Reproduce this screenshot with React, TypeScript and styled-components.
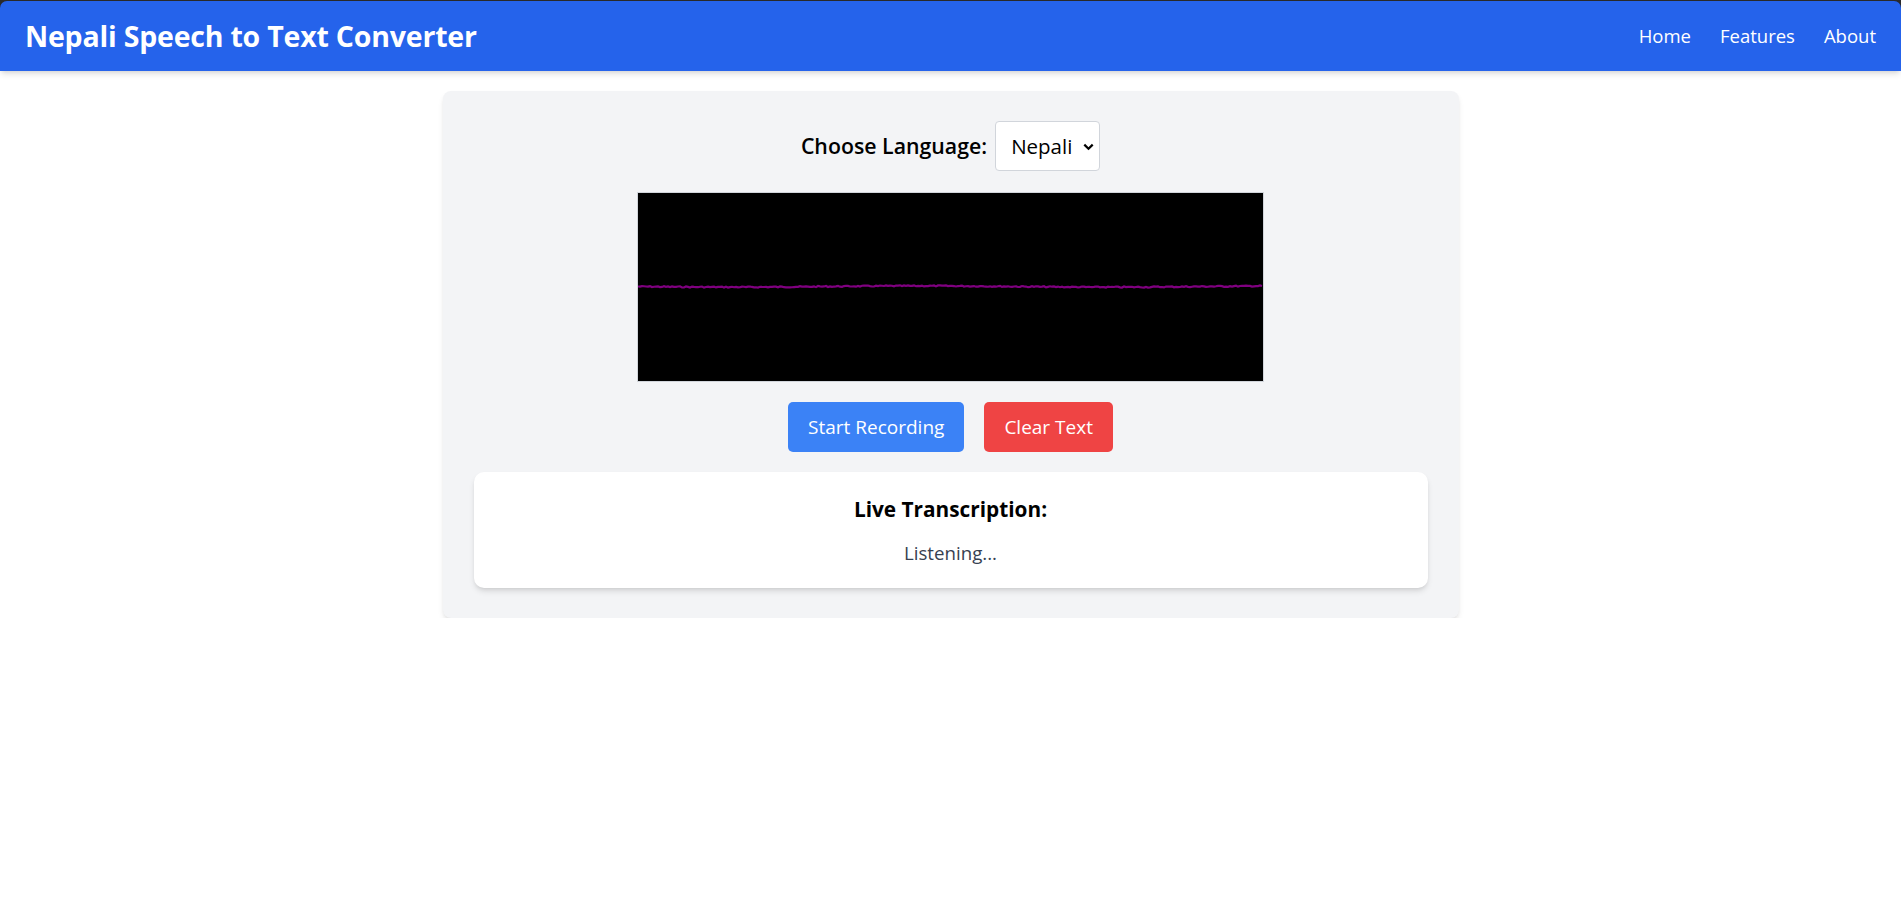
import React from "react";
import styled, { createGlobalStyle } from "styled-components";

const GlobalStyle = createGlobalStyle`
  html, body {
    margin: 0;
    padding: 0;
    background: #ffffff;
    font-family: "Open Sans", "Noto Sans", "Liberation Sans", sans-serif;
    color: #000;
  }
  * { box-sizing: border-box; }
`;

const TopFrame = styled.div`
  background: #2a2a2a;
  padding-top: 1px;
`;

const NavBar = styled.header`
  position: relative;
  z-index: 1;
  height: 70px;
  display: flex;
  align-items: center;
  justify-content: space-between;
  padding: 0 25px 0 25px;
  background: #2563eb;
  border-radius: 7px 7px 0 0;
  box-shadow: 0 4px 6px -1px rgba(0, 0, 0, 0.12), 0 2px 4px -2px rgba(0, 0, 0, 0.1);
`;

const Brand = styled.h1`
  margin: 0;
  font-size: 28.5px;
  line-height: 36px;
  font-weight: 700;
  color: #ffffff;
  letter-spacing: -0.2px;
`;

const NavLinks = styled.nav`
  display: flex;
  gap: 29px;
`;

const NavLink = styled.a`
  font-size: 18.5px;
  line-height: 28px;
  color: #ffffff;
  text-decoration: none;
`;

const Main = styled.main`
  display: flex;
  justify-content: center;
  padding-top: 20px;
`;

const Card = styled.section`
  width: 1016px;
  background: #f3f4f6;
  border-radius: 8px;
  padding: 30px 31px 30px 31px;
  box-shadow: 0 4px 6px -1px rgba(0, 0, 0, 0.1), 0 2px 4px -2px rgba(0, 0, 0, 0.1);
  display: flex;
  flex-direction: column;
  align-items: center;
`;

const LanguageRow = styled.div`
  display: flex;
  align-items: center;
  gap: 8px;
`;

const Label = styled.label`
  font-size: 21.3px;
  font-weight: 600;
  line-height: 30px;
  color: #000;
`;

const SelectWrap = styled.div`
  position: relative;
  display: inline-flex;
`;

const Select = styled.select`
  appearance: none;
  -webkit-appearance: none;
  height: 50px;
  width: 105px;
  padding: 0 24px 0 15px;
  font-family: inherit;
  font-size: 20.5px;
  color: #000;
  background: #ffffff;
  border: 1px solid #d1d5db;
  border-radius: 4px;
  outline: none;
`;

const Chevron = styled.svg`
  position: absolute;
  right: 6px;
  top: 50%;
  width: 11px;
  height: 8px;
  margin-top: -3px;
  pointer-events: none;
`;

const Scope = styled.div`
  margin-top: 21px;
  width: 627px;
  height: 190px;
  background: #000;
  border: 1px solid #d1d5db;
  display: flex;
`;

const Wave = styled.svg`
  width: 100%;
  height: 100%;
  display: block;
`;

const ButtonRow = styled.div`
  margin-top: 20px;
  display: flex;
  gap: 20px;
`;

const Button = styled.button<{ $tone: "blue" | "red" }>`
  height: 50px;
  padding: 0 20px;
  border: none;
  border-radius: 5px;
  font-family: inherit;
  font-size: 19px;
  color: #ffffff;
  cursor: pointer;
  background: ${(p) => (p.$tone === "blue" ? "#3b82f6" : "#ef4444")};
`;

const TranscriptBox = styled.div`
  margin-top: 20px;
  width: 100%;
  background: #ffffff;
  border-radius: 10px;
  padding: 23px 24px 21px;
  box-shadow: 0 4px 6px -1px rgba(0, 0, 0, 0.12), 0 2px 4px -2px rgba(0, 0, 0, 0.1);
  text-align: center;
`;

const TranscriptTitle = styled.h2`
  margin: 0;
  font-size: 20.8px;
  line-height: 28px;
  font-weight: 700;
  color: #000;
`;

const TranscriptText = styled.p`
  margin: 16px 0 0;
  font-size: 18.7px;
  line-height: 28px;
  color: #374151;
`;

function wavePoints(): string {
  const pts: string[] = [];
  let seed = 7;
  const rnd = () => {
    seed = (seed * 9301 + 49297) % 233280;
    return seed / 233280;
  };
  for (let x = 0; x <= 625; x += 2) {
    const base = 93.5 + Math.sin(x / 60) * 0.6;
    const n = (rnd() - 0.5) * 1.2;
    pts.push(`${x},${(base + n).toFixed(2)}`);
  }
  return pts.join(" ");
}

export default function App() {
  const points = React.useMemo(wavePoints, []);
  return (
    <>
      <GlobalStyle />
      <TopFrame>
        <NavBar>
          <Brand>Nepali Speech to Text Converter</Brand>
          <NavLinks>
            <NavLink href="#">Home</NavLink>
            <NavLink href="#">Features</NavLink>
            <NavLink href="#">About</NavLink>
          </NavLinks>
        </NavBar>
      </TopFrame>
      <Main>
        <Card>
          <LanguageRow>
            <Label htmlFor="lang">Choose Language:</Label>
            <SelectWrap>
              <Select id="lang" defaultValue="ne">
                <option value="ne">Nepali</option>
                <option value="en">English</option>
              </Select>
              <Chevron viewBox="0 0 11 8">
                <path d="M1.3 1.6 L5.5 5.8 L9.7 1.6" fill="none" stroke="#000" strokeWidth="2.2" />
              </Chevron>
            </SelectWrap>
          </LanguageRow>
          <Scope>
            <Wave viewBox="0 0 625 188" preserveAspectRatio="none">
              <polyline points={points} fill="none" stroke="#800080" strokeWidth="2.2" />
            </Wave>
          </Scope>
          <ButtonRow>
            <Button $tone="blue">Start Recording</Button>
            <Button $tone="red">Clear Text</Button>
          </ButtonRow>
          <TranscriptBox>
            <TranscriptTitle>Live Transcription:</TranscriptTitle>
            <TranscriptText>Listening...</TranscriptText>
          </TranscriptBox>
        </Card>
      </Main>
    </>
  );
}
